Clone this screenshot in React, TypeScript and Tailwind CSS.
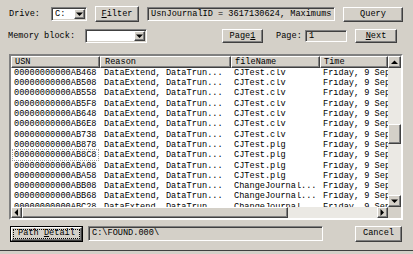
import type { ReactNode } from 'react';

const RAISED =
  'border border-t-white border-l-white border-r-[#404040] border-b-[#404040] shadow-[inset_-1px_-1px_0_#808080] bg-[#d4d0c8]';
const SUNKEN =
  'border border-t-[#808080] border-l-[#808080] border-r-white border-b-white shadow-[inset_1px_1px_0_#404040,inset_-1px_-1px_0_#d4d0c8]';

const ROWS = [
  ['00000000000AB468', 'CJTest.clv'],
  ['00000000000AB508', 'CJTest.clv'],
  ['00000000000AB558', 'CJTest.clv'],
  ['00000000000AB5F8', 'CJTest.clv'],
  ['00000000000AB648', 'CJTest.clv'],
  ['00000000000AB6E8', 'CJTest.clv'],
  ['00000000000AB738', 'CJTest.clv'],
  ['00000000000AB878', 'CJTest.plg'],
  ['00000000000AB8C8', 'CJTest.plg'],
  ['00000000000ABA08', 'CJTest.plg'],
  ['00000000000ABA58', 'CJTest.plg'],
  ['00000000000ABB08', 'ChangeJournal...'],
  ['00000000000ABB68', 'ChangeJournal...'],
  ['00000000000ABC28', 'ChangeJournal...'],
];

type Dir = 'up' | 'down' | 'left' | 'right';

const Arrow = ({ dir }: { dir: Dir }) => {
  const pts = {
    up: '0,4 7,4 3.5,0.5',
    down: '0,0.5 7,0.5 3.5,4',
    left: '4,0 4,7 0.5,3.5',
    right: '0.5,0 0.5,7 4,3.5',
  }[dir];
  const vertical = dir === 'up' || dir === 'down';
  return (
    <svg width={vertical ? 7 : 5} height={vertical ? 5 : 7} viewBox={vertical ? '0 0 7 5' : '0 0 5 7'}>
      <polygon points={pts} fill="#000" />
    </svg>
  );
};

const Button = ({ className, children }: { className: string; children: ReactNode }) => (
  <div className={`${RAISED} flex items-center justify-center ${className}`}>
    <span className="whitespace-pre">{children}</span>
  </div>
);

const Combo = ({ className, value }: { className: string; value?: string }) => (
  <div className={`${SUNKEN} bg-white flex items-stretch p-[1px] ${className}`}>
    <span className="flex-1 pl-[2px] flex items-center bg-white">{value}</span>
    <div className={`${RAISED} w-[11px] flex items-center justify-center`}>
      <Arrow dir="down" />
    </div>
  </div>
);

const Field = ({ className, value }: { className: string; value: string }) => (
  <div className={`${SUNKEN} bg-[#d4d0c8] flex items-center pl-[3px] overflow-hidden whitespace-nowrap ${className}`}>
    {value}
  </div>
);

const COLS = ['w-[89px] pl-[3px]', 'w-[131px] pl-[4px]', 'w-[89px] pl-[3px]', 'w-[68px] pl-[3px]'];
const HEADERS = ['USN', 'Reason', 'fileName', 'Time'];

const App = () => {
  return (
    <div className="w-[413px] h-[254px] bg-[#d4d0c8] overflow-hidden flex flex-col text-black text-[8.6px] leading-none font-['Liberation_Mono',monospace]">
      {/* top line */}
      <div className="mt-[6px] h-[16px] flex items-center pl-[9px]">
        <span className="w-[42px]">Drive:</span>
        <Combo className="w-[36px] h-[14px]" value="C:" />
        <Button className="ml-[8px] w-[44px] h-[16px]">
          <u>F</u>ilter
        </Button>
        <Field className="ml-[8px] w-[188px] h-[14px]" value="UsnJournalID = 3617130624, Maximums" />
        <Button className="ml-[8px] w-[60px] h-[15px]">Query</Button>
      </div>

      {/* second line */}
      <div className="mt-[7px] h-[14px] flex items-center pl-[8px]">
        <span className="w-[77px]">Memory block:</span>
        <Combo className="w-[62px] h-[14px]" />
        <Button className="ml-[75px] w-[41px] h-[14px]">
          Page<u>1</u>
        </Button>
        <span className="ml-[13px] w-[29px]">Page:</span>
        <Field className="w-[42px] h-[12px]" value="1" />
        <Button className="ml-[8px] w-[42px] h-[14px]">
          <u>N</u>ext
        </Button>
      </div>

      {/* list */}
      <div className="mt-[11px] ml-[9px] w-[394px] h-[166px] border-2 border-t-[#808080] border-l-[#808080] border-r-white border-b-white bg-white grid grid-cols-[377px_13px] grid-rows-[151px_11px]">
        <div className="overflow-hidden flex flex-col">
          <div className="flex h-[12px] shrink-0">
            {HEADERS.map((h, i) => (
              <div key={h} className={`${RAISED} ${COLS[i]} flex items-center shrink-0`}>
                {h}
              </div>
            ))}
          </div>
          {ROWS.map(([usn, file], r) => (
            <div key={usn} className="flex h-[10.3px] shrink-0 items-center whitespace-nowrap">
              <div className={`${COLS[0]} shrink-0`}>
                <span className={r === 8 ? 'outline outline-1 outline-dotted outline-[#a0a0a0] px-[1px] -ml-[1px]' : ''}>
                  {usn}
                </span>
              </div>
              <div className={`${COLS[1]} shrink-0 overflow-hidden`}>DataExtend, DataTrun...</div>
              <div className={`${COLS[2]} shrink-0 overflow-hidden`}>{file}</div>
              <div className={`${COLS[3]} shrink-0 overflow-hidden`}>Friday, 9 Sep</div>
            </div>
          ))}
        </div>

        {/* vertical scrollbar */}
        <div className="bg-[#ebe9e4] flex flex-col">
          <div className={`${RAISED} h-[12px] flex items-center justify-center`}>
            <Arrow dir="up" />
          </div>
          <div className="h-[56px]" />
          <div className={`${RAISED} h-[20px]`} />
          <div className="flex-1" />
          <div className={`${RAISED} h-[12px] flex items-center justify-center`}>
            <Arrow dir="down" />
          </div>
        </div>

        {/* horizontal scrollbar */}
        <div className="bg-[#ebe9e4] flex">
          <div className={`${RAISED} w-[11px] flex items-center justify-center`}>
            <Arrow dir="left" />
          </div>
          <div className={`${RAISED} w-[266px]`} />
          <div className="flex-1" />
          <div className={`${RAISED} w-[11px] flex items-center justify-center`}>
            <Arrow dir="right" />
          </div>
        </div>
        <div className="bg-[#d4d0c8]" />
      </div>

      {/* bottom line */}
      <div className="mt-[5px] h-[17px] flex items-center pl-[10px]">
        <div className="w-[73px] h-[16px] border border-black flex">
          <div className={`${RAISED} flex-1 flex items-center justify-center outline-1 outline-dotted outline-black -outline-offset-3`}>
            <span className="whitespace-pre">
              Path <u>D</u>etail
            </span>
          </div>
        </div>
        <Field className="ml-[5px] w-[235px] h-[15px]" value="C:\FOUND.000\" />
        <Button className="ml-auto mr-[11px] w-[47px] h-[16px]">Cancel</Button>
      </div>

      <div className="mt-[8px] h-px bg-[#404040]" />
    </div>
  );
};

export default App;
